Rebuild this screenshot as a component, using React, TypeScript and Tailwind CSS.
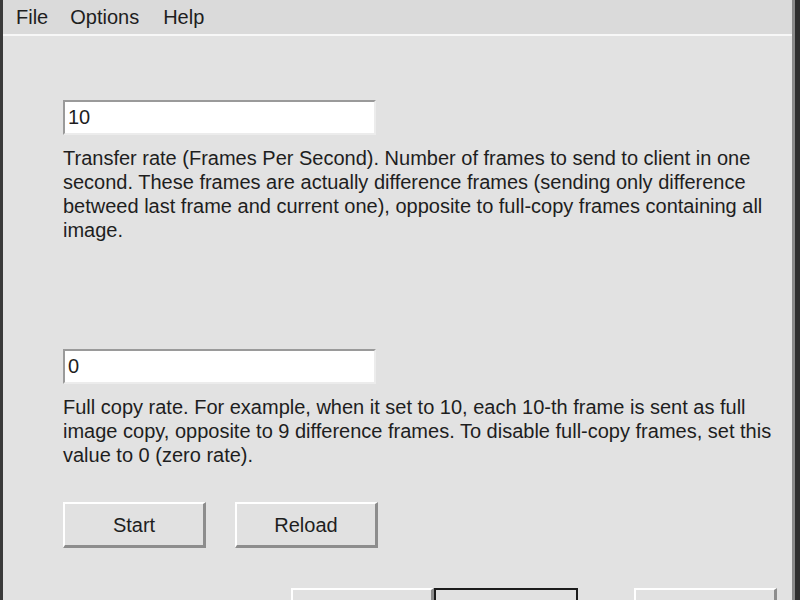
import React, { useState } from 'react';

const RateField = ({ value, onChange }: { value: string; onChange: (v: string) => void }) => (
  <input
    value={value}
    onChange={(e) => onChange(e.target.value)}
    className="block w-[313px] h-[35px] bg-white pl-[3px] text-[20px] text-[#1e1e1e] outline-none border-2 border-t-[#9a9a9a] border-l-[#9a9a9a] border-r-[#ececec] border-b-[#ececec]"
  />
);

const WinButton = ({ label, isDefault }: { label?: string; isDefault?: boolean }) => (
  <button
    className={
      isDefault
        ? 'w-[144px] h-[46px] bg-[#e1e1e1] text-[20px] text-[#1e1e1e] border-2 border-[#1c1c1c]'
        : 'w-[143px] h-[46px] bg-[#e1e1e1] text-[20px] text-[#1e1e1e] border-t-2 border-l-2 border-t-white border-l-white border-b-[3px] border-r-[3px] border-b-[#8d8d8d] border-r-[#8d8d8d]'
    }
  >
    {label}
  </button>
);

const App = () => {
  const [fps, setFps] = useState('10');
  const [fullRate, setFullRate] = useState('0');

  return (
    <div className="w-[800px] h-[600px] overflow-hidden flex bg-[#e2e2e2] text-[#1e1e1e] font-['Liberation_Sans',Arial,sans-serif]">
      <div className="w-[3px] shrink-0 bg-[#3a3a3a]" />

      <div className="flex-1 flex flex-col">
        <div className="h-[36px] shrink-0 flex items-center pl-[2px] bg-[#dadada] border-b-2 border-[#f7f7f7] text-[20px]">
          <span className="px-[11px]">File</span>
          <span className="px-[11px]">Options</span>
          <span className="pl-[13px]">Help</span>
        </div>

        <div className="pl-[60px] pt-[64px]">
          <RateField value={fps} onChange={setFps} />
          <p className="mt-[11px] w-[725px] text-[20px] leading-[24px]">
            Transfer rate (Frames Per Second). Number of frames to send to client in one second. These frames are
            actually difference frames (sending only difference betweed last frame and current one), opposite to
            full-copy frames containing all image.
          </p>

          <div className="mt-[107px]">
            <RateField value={fullRate} onChange={setFullRate} />
          </div>
          <p className="mt-[11px] w-[725px] text-[20px] leading-[24px]">
            Full copy rate. For example, when it set to 10, each 10-th frame is sent as full image copy, opposite to 9
            difference frames. To disable full-copy frames, set this value to 0 (zero rate).
          </p>

          <div className="mt-[35px] flex gap-[29px]">
            <WinButton label="Start" />
            <WinButton label="Reload" />
          </div>
        </div>

        <div className="mt-[40px] pl-[288px] flex">
          <WinButton />
          <WinButton isDefault />
          <div className="ml-[56px]">
            <WinButton />
          </div>
        </div>
      </div>

      <div className="w-[3px] shrink-0 bg-[#8a8a8a]" />
      <div className="w-[5px] shrink-0 bg-[#2e2e2e]" />
    </div>
  );
};

export default App;
